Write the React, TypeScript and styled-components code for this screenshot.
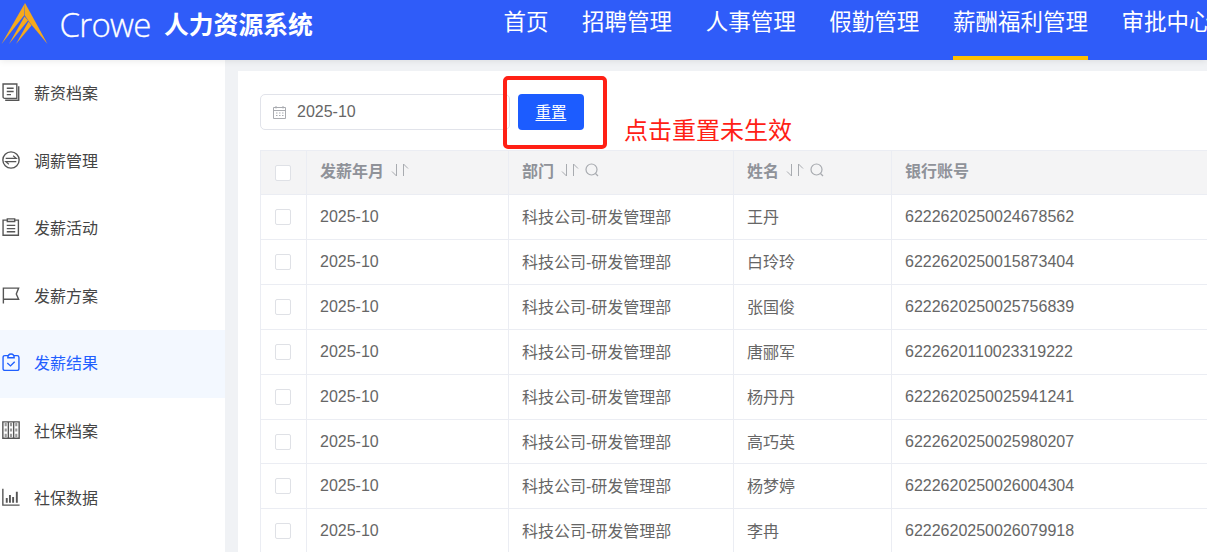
import React from "react";
import styled, { createGlobalStyle } from "styled-components";

const Global = createGlobalStyle`
  html, body { margin: 0; padding: 0; background: #f0f2f5; overflow: hidden; }
  body { font-family: "Liberation Sans", "Noto Sans CJK SC", sans-serif; }
  * { box-sizing: border-box; }
`;
const Page = styled.div`
  width: 1207px; height: 552px; overflow: hidden; position: relative; display: flex; flex-direction: column;
`;
const Header = styled.header`
  height: 60px; flex: none; background: #2f5cf9; display: flex; align-items: stretch; white-space: nowrap; overflow: hidden;
`;
const HeaderWrap = styled.div`
  flex: none; position: relative; z-index: 2; box-shadow: 0 1px 7px rgba(0, 0, 0, 0.09);
`;
const Brand = styled.div`
  display: flex; align-items: center; width: 503.5px; flex: none; color: #fff;
`;
const LogoMark = styled.svg`
  width: 50px; height: 60px; flex: none;
`;
const Wordmark = styled.span`
  font-family: "Open Sans", sans-serif; font-weight: 300; font-size: 33px; letter-spacing: -0.7px; margin: 0 0 11px 9.500px; width: 104.500px; flex: none;
  -webkit-text-stroke: 0.3px #fff;
`;
const SystemName = styled.span`
  font-family: "Noto Sans CJK SC", sans-serif; font-weight: 700; font-size: 24.8px; margin-bottom: 15px;
`;
const Nav = styled.nav`
  display: flex; gap: 33.6px;
`;
const NavItem = styled.a<{ $active?: boolean }>`
  color: #fff; font-size: 22.5px; height: 60px; line-height: 45px; border-bottom: 4px solid ${p => (p.$active ? "#ffc000" : "transparent")};
`;
const Body = styled.div`
  flex: 1; display: flex; min-height: 0;
`;
const Side = styled.aside`
  width: 225px; flex: none; background: #fff; position: relative;
`;
const SideItem = styled.div<{ $active?: boolean }>`
  height: 67.5px; display: flex; align-items: center; gap: 14px; padding: 0 0 3px 2px; font-size: 16px;
  color: ${p => (p.$active ? "#1f5fff" : "#444")};
  background: ${p => (p.$active ? "#f3f8ff" : "transparent")};
  svg { width: 18px; height: 18px; flex: none; color: ${p => (p.$active ? "#1f5fff" : "#555")}; }
`;
const Main = styled.main`
  flex: 1; min-width: 0; padding: 11px 0 0 13px;
`;
const Panel = styled.section`
  background: #fff; height: 100%; padding: 23px 0 0 22px; overflow: hidden;
`;
const Filter = styled.div`
  display: flex; gap: 8px; height: 36px; margin-bottom: 20px;
`;
const DateBox = styled.div`
  width: 250px; height: 36px; border: 1px solid #e1e3ea; border-radius: 5px; display: flex; align-items: center; gap: 10px; padding-left: 11px; color: #666; font-size: 16px;
`;
const ResetButton = styled.button`
  width: 66px; height: 36px; border: 0; border-radius: 4px; background: #1c5cff; color: #fff; font: inherit; font-size: 15.5px; text-decoration: underline; text-underline-offset: 2px; padding: 0 0 3px;
`;
const Table = styled.div`
  width: 960px; border-left: 1px solid #ebedf3; border-top: 1px solid #ebedf3;
`;
const Row = styled.div<{ $head?: boolean }>`
  display: grid; grid-template-columns: 46px 202px 225px 158px 1fr; height: ${p => (p.$head ? "44.4px" : "44.85px")};
  background: ${p => (p.$head ? "#f4f4f5" : "#fff")};
  border-bottom: 1px solid #ebedf3;
  color: ${p => (p.$head ? "#8f9299" : "#666")};
  font-weight: ${p => (p.$head ? 700 : 400)};
  font-size: 16px;
`;
const Cell = styled.div<{ $lift?: number }>`
  display: flex; align-items: center; padding: 0 0 ${p => p.$lift ?? 0}px 13px; border-right: 1px solid #ebedf3; white-space: nowrap;
`;
const CheckCell = styled(Cell)`
  padding-left: 14px;
`;
const Check = styled.span`
  width: 16px; height: 16px; border: 1px solid #dfe1e6; border-radius: 2px; background: #fff; display: block;
`;
const SortIcons = styled.svg`
  width: 38px; height: 16px; margin-left: 7px; flex: none;
`;
const RedFrame = styled.div`
  position: absolute; left: 503px; top: 76px; width: 104px; height: 73px; border: 4px solid #ff2015; border-radius: 5px;
`;
const Annotation = styled.div`
  position: absolute; left: 624px; top: 115px; color: #ff2015; font-size: 24px; line-height: 32px; white-space: nowrap;
`;

const navs = ["首页", "招聘管理", "人事管理", "假勤管理", "薪酬福利管理", "审批中心"];
const S = { fill: "none", stroke: "currentColor", strokeWidth: 1.3 } as const;
const sideItems: { label: string; icon: React.ReactNode; active?: boolean }[] = [
  { label: "薪资档案", icon: <svg viewBox="0 0 17 17" {...S}><path d="M1 1h13v13.500H2.500A1.500 1.500 0 0 1 1 13z" /><path d="M15.800 3v13.300H3M4.500 5h6.500M4.500 8h6.500M4.500 11h4" /></svg> },
  { label: "调薪管理", icon: <svg viewBox="0 0 17 17" {...S}><circle cx="8.500" cy="8.500" r="7.700" /><path d="M3.500 7h10l-3-2.500M13.500 10h-10l3 2.500" strokeWidth="1.100" /></svg> },
  { label: "发薪活动", icon: <svg viewBox="0 0 17 17" {...S}><path d="M5 2H1v14.300h14.500V2H12M5 .8h7v2.500H5zM4.500 7h8M4.500 10h8M4.500 13h8" /></svg> },
  { label: "发薪方案", icon: <svg viewBox="0 0 17 17" {...S}><path d="M1.300 16.500V2h14.400l-2.200 5.500 2.200 5H1.300" /></svg> },
  { label: "发薪结果", active: true, icon: <svg viewBox="0 0 17 17" {...S}><path d="M5.500 2.500H2.700A1.700 1.700 0 0 0 1 4.200v10.600a1.700 1.700 0 0 0 1.700 1.700h11.600a1.700 1.700 0 0 0 1.700-1.700V4.200a1.700 1.700 0 0 0-1.700-1.700h-2.800M5.500 4.500c0-4.800 6-4.800 6 0zM5 9.500l3 2.700 4-4" /></svg> },
  { label: "社保档案", icon: <svg viewBox="0 0 17 17" {...S}><path d="M.8.800h15.400v15.500H.8zM6 .8v15.500M11 .8v15.500" /><path d="M2.500 2h2v3h-2zM7.500 2h2v3h-2zM12.500 2h2v3h-2zM2.500 7h2v3h-2zM7.500 7h2v3h-2zM12.500 7h2v3h-2zM2.500 12h2v3h-2zM7.500 12h2v3h-2zM12.500 12h2v3h-2z" fill="#999" stroke="none" /></svg> },
  { label: "社保数据", icon: <svg viewBox="0 0 17 17" {...S}><path d="M.8.800v15.400h15.800" /><path d="M4.500 14V9.500M7.500 14V6.500M10.500 14V8.500M14 14V3.500" strokeWidth="1.800" /></svg> },
];
const rows = [
  ["王丹", "6222620250024678562"],
  ["白玲玲", "6222620250015873404"],
  ["张国俊", "6222620250025756839"],
  ["唐郦军", "6222620110023319222"],
  ["杨丹丹", "6222620250025941241"],
  ["高巧英", "6222620250025980207"],
  ["杨梦婷", "6222620250026004304"],
  ["李冉", "6222620250026079918"],
];

const Sort = ({ search }: { search?: boolean }) => (
  <SortIcons viewBox="0 0 38 16" fill="none" stroke="#a8abb0" strokeWidth="1">
    <path d="M5.500 2v12L1 9.500M12.500 14V2L17 6.500" />
    {search && <g strokeWidth="1.200"><circle cx="30.500" cy="7.500" r="5.500" /><path d="M34.500 11.500l2.500 2.500" /></g>}
  </SortIcons>
);

export default function App() {
  return (
    <Page>
      <Global />
      <HeaderWrap>
        <Header>
          <Brand>
            <LogoMark viewBox="0 0 50 60">
              <g fill="#f5a91d">
                <path d="M25 3 L47.500 44 L30 23 L24.500 15 Z" />
                <path d="M25 3 L1.500 44 L24 15.500 Z" />
                <path d="M24.500 16.500 L9 44 L28 20.500 Z" />
                <path d="M28.500 21.500 L16 44 L31.500 25.500 Z" />
              </g>
            </LogoMark>
            <Wordmark>Crowe</Wordmark>
            <SystemName>人力资源系统</SystemName>
          </Brand>
          <Nav>
            {navs.map(n => <NavItem key={n} $active={n === "薪酬福利管理"}>{n}</NavItem>)}
          </Nav>
        </Header>
      </HeaderWrap>
      <Body>
        <Side>
          {sideItems.map(i => <SideItem key={i.label} $active={i.active}>{i.icon}<span>{i.label}</span></SideItem>)}
        </Side>
        <Main>
          <Panel>
            <Filter>
              <DateBox>
                <svg width="15" height="15" viewBox="0 0 15 15" fill="none" stroke="#a9abb0"><path d="M1.500 2.500h12v11h-12zM1.500 5.500h12M4 1v2.500M11 1v2.500M4 8h1.500M7 8h1.500M10 8h1.500M4 10.500h1.500M7 10.500h1.500M10 10.500h1.500" /></svg>
                2025-10
              </DateBox>
              <ResetButton>重置</ResetButton>
            </Filter>
            <Table>
              <Row $head>
                <CheckCell><Check /></CheckCell>
                <Cell $lift={5}>发薪年月<Sort /></Cell>
                <Cell $lift={5}>部门<Sort search /></Cell>
                <Cell $lift={5}>姓名<Sort search /></Cell>
                <Cell $lift={5}>银行账号</Cell>
              </Row>
              {rows.map(([name, acct]) => (
                <Row key={acct}>
                  <CheckCell><Check /></CheckCell>
                  <Cell>2025-10</Cell>
                  <Cell $lift={2}>科技公司-研发管理部</Cell>
                  <Cell $lift={2}>{name}</Cell>
                  <Cell>{acct}</Cell>
                </Row>
              ))}
            </Table>
          </Panel>
        </Main>
      </Body>
      <RedFrame />
      <Annotation>点击重置未生效</Annotation>
    </Page>
  );
}
